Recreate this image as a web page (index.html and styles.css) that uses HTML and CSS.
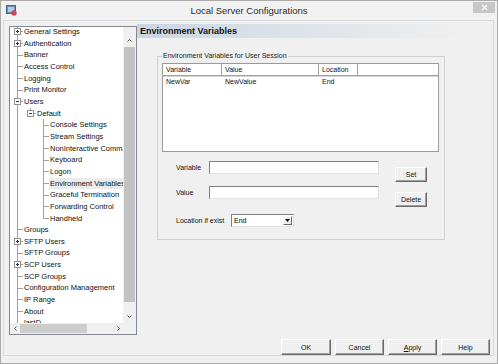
FILE: index.html
```html
<!DOCTYPE html>
<html lang="en">
<head>
    <meta charset="UTF-8">
    <title>Local Server Configurations</title>
    <link rel="stylesheet" href="styles.css">
</head>
<body>
    <div class="window">
        <div class="titlebar">
            <svg class="app-icon" width="11" height="11" viewBox="0 0 11 11">
                <rect x="0.5" y="0.5" width="9" height="8" fill="#6f8fb5" stroke="#44668f"/>
                <rect x="2" y="2" width="6" height="5" fill="#b3cbe4"/>
                <circle cx="8" cy="8" r="2.7" fill="#d9435a"/>
            </svg>
            <span class="title">Local Server Configurations</span>
            <span class="close">
                <svg width="7" height="7" viewBox="0 0 7 7"><path d="M1 1L6 6M6 1L1 6" stroke="#fff" stroke-width="1.2"/></svg>
            </span>
        </div>

        <div class="frame">
            <div class="main">
                <div class="tree-box">
                    <div class="tree-view">
                        <div class="tree-list">
                            <div class="node"><i class="joint"><b class="box plus"></b></i><span class="label">General Settings</span></div>
                            <div class="node"><i class="joint"><b class="box plus"></b></i><span class="label">Authentication</span></div>
                            <div class="node"><i class="joint"></i><span class="label">Banner</span></div>
                            <div class="node"><i class="joint"></i><span class="label">Access Control</span></div>
                            <div class="node"><i class="joint"></i><span class="label">Logging</span></div>
                            <div class="node"><i class="joint"></i><span class="label">Print Monitor</span></div>
                            <div class="node"><i class="joint"><b class="box minus"></b></i><span class="label">Users</span></div>
                            <div class="node lv1"><i class="joint last"><b class="box minus"></b></i><span class="label">Default</span></div>
                            <div class="node lv2"><i class="joint"></i><span class="label">Console Settings</span></div>
                            <div class="node lv2"><i class="joint"></i><span class="label">Stream Settings</span></div>
                            <div class="node lv2"><i class="joint"></i><span class="label">NonInteractive Commands</span></div>
                            <div class="node lv2"><i class="joint"></i><span class="label">Keyboard</span></div>
                            <div class="node lv2"><i class="joint"></i><span class="label">Logon</span></div>
                            <div class="node lv2"><i class="joint"></i><span class="label selected">Environment Variables</span></div>
                            <div class="node lv2"><i class="joint"></i><span class="label">Graceful Termination</span></div>
                            <div class="node lv2"><i class="joint"></i><span class="label">Forwarding Control</span></div>
                            <div class="node lv2"><i class="joint last"></i><span class="label">Handheld</span></div>
                            <div class="node"><i class="joint"></i><span class="label">Groups</span></div>
                            <div class="node"><i class="joint"><b class="box plus"></b></i><span class="label">SFTP Users</span></div>
                            <div class="node"><i class="joint"></i><span class="label">SFTP Groups</span></div>
                            <div class="node"><i class="joint"><b class="box plus"></b></i><span class="label">SCP Users</span></div>
                            <div class="node"><i class="joint"></i><span class="label">SCP Groups</span></div>
                            <div class="node"><i class="joint"></i><span class="label">Configuration Management</span></div>
                            <div class="node"><i class="joint"></i><span class="label">IP Range</span></div>
                            <div class="node"><i class="joint"></i><span class="label">About</span></div>
                            <div class="node"><i class="joint"></i><span class="label">lastD</span></div>
                        </div>
                    </div>
                    <div class="vscroll">
                        <div class="vs-up">
                            <svg width="5" height="3" viewBox="0 0 5 3"><path d="M0.5 2.5L2.5 0.5L4.5 2.5" fill="none" stroke="#555"/></svg>
                        </div>
                        <div class="vs-thumb"></div>
                        <div class="vs-down">
                            <svg width="5" height="3" viewBox="0 0 5 3"><path d="M0.5 0.5L2.5 2.5L4.5 0.5" fill="none" stroke="#555"/></svg>
                        </div>
                    </div>
                    <div class="hscroll">
                        <div class="hs-btn">
                            <svg width="3" height="5" viewBox="0 0 3 5"><path d="M2.5 0.5L0.5 2.5L2.5 4.5" fill="none" stroke="#555"/></svg>
                        </div>
                        <div class="hs-thumb"></div>
                        <div class="hs-track"></div>
                        <div class="hs-btn">
                            <svg width="3" height="5" viewBox="0 0 3 5"><path d="M0.5 0.5L2.5 2.5L0.5 4.5" fill="none" stroke="#555"/></svg>
                        </div>
                    </div>
                    <div class="corner"></div>
                </div>

                <div class="panel">
                    <div class="panel-head">Environment Variables</div>

                    <fieldset class="group">
                        <legend>Environment Variables for User Session</legend>

                        <div class="listview">
                            <div class="lv-head">
                                <span class="col col-var">Variable</span>
                                <span class="col col-val">Value</span>
                                <span class="col col-loc">Location</span>
                            </div>
                            <div class="lv-row">
                                <span class="col col-var">NewVar</span>
                                <span class="col col-val">NewValue</span>
                                <span class="col col-loc">End</span>
                            </div>
                        </div>

                        <div class="form">
                            <div class="frow frow1">
                                <label class="flabel">Variable</label>
                                <input class="field" type="text">
                                <button class="btn side-btn">Set</button>
                            </div>
                            <div class="frow frow2">
                                <label class="flabel">Value</label>
                                <input class="field" type="text">
                                <button class="btn side-btn">Delete</button>
                            </div>
                            <div class="frow frow3">
                                <label class="flabel wide">Location if exist</label>
                                <div class="select">
                                    <span class="select-text">End</span>
                                    <span class="select-arrow">
                                        <svg width="5" height="3" viewBox="0 0 5 3"><path d="M0 0H5L2.5 3Z" fill="#000"/></svg>
                                    </span>
                                </div>
                            </div>
                        </div>
                    </fieldset>
                </div>
            </div>

            <div class="buttons">
                <button class="btn dlg-btn ok">OK</button>
                <button class="btn dlg-btn">Cancel</button>
                <button class="btn dlg-btn"><u>A</u>pply</button>
                <button class="btn dlg-btn">Help</button>
            </div>
        </div>
    </div>
</body>
</html>
```

FILE: styles.css
```css
* {
    box-sizing: border-box;
}
body {
    margin: 0;
    background: #fff;
    font-family: "Liberation Sans", Arial, sans-serif;
    color: #000;
}
.window {
    width: 498px;
    height: 364px;
    border: 1px solid #ababab;
    background: #f0f0f0;
    display: flex;
    flex-direction: column;
}

/* title bar */
.titlebar {
    height: 19px;
    flex: none;
    display: grid;
    grid-template-columns: 1fr auto 1fr;
    align-items: center;
    background: #f2f2f2;
}
.app-icon {
    display: block;
    margin-left: 5px;
}
.title {
    font-size: 9.5px;
    color: #2b2b2b;
}
.close {
    justify-self: end;
    align-self: start;
    margin: 1px 2px 0 0;
    width: 22px;
    height: 11px;
    background: #c7c7c7;
    display: flex;
    align-items: center;
    justify-content: center;
}
.close svg {
    display: block;
}

.frame {
    flex: 1;
    margin: 0 3px 7px 2px;
    border: 1px solid #d9d9d9;
    padding: 5px 3px 0 5px;
    display: flex;
    flex-direction: column;
}
.main {
    display: flex;
    height: 309px;
}

/* tree */
.tree-box {
    width: 128px;
    height: 309px;
    flex: none;
    border: 1px solid #828790;
    background: #fff;
    display: grid;
    grid-template-columns: 113px 13px;
    grid-template-rows: 296px 11px;
}
.tree-view {
    overflow: hidden;
}
.tree-list {
    margin-top: -1px;
    background: linear-gradient(#a0a0a0, #a0a0a0) 7px 6px / 1px 100% no-repeat;
}
.node {
    display: flex;
    height: 11.67px;
    line-height: 11.67px;
    font-size: 7.5px;
    color: #111;
    white-space: nowrap;
}
.node.lv1 {
    padding-left: 13px;
}
.node.lv2 {
    padding-left: 26px;
}
.joint {
    flex: none;
    width: 13px;
    height: 100%;
    display: flex;
    align-items: center;
    background:
        linear-gradient(#a0a0a0, #a0a0a0) 7px 50% / 6px 1px no-repeat,
        linear-gradient(#a0a0a0, #a0a0a0) 7px 0 / 1px 100% no-repeat;
}
.joint.last {
    background:
        linear-gradient(#a0a0a0, #a0a0a0) 7px 50% / 6px 1px no-repeat,
        linear-gradient(#a0a0a0, #a0a0a0) 7px 0 / 1px 50% no-repeat;
}
.box {
    width: 7px;
    height: 7px;
    margin-left: 4px;
    border: 1px solid #919191;
}
.box.plus {
    background:
        linear-gradient(#333, #333) center / 3px 1px no-repeat,
        linear-gradient(#333, #333) center / 1px 3px no-repeat,
        #fff;
}
.box.minus {
    background:
        linear-gradient(#333, #333) center / 3px 1px no-repeat,
        #fff;
}
.label {
    padding: 0 1px;
}
.label.selected {
    background: #ececec;
}

.vscroll {
    background: #f0f0f0;
    display: flex;
    flex-direction: column;
}
.vs-up,
.vs-down {
    display: flex;
    justify-content: center;
    align-items: flex-end;
    padding-bottom: 5px;
}
.vs-up {
    height: 20px;
}
.vs-down {
    flex: 1;
}
.vs-thumb {
    height: 255px;
    margin: 0 1px;
    background: #c2c2c2;
}
.vscroll svg,
.hscroll svg {
    display: block;
}
.hscroll {
    background: #f0f0f0;
    display: flex;
    align-items: center;
}
.hs-btn {
    width: 10px;
    display: flex;
    justify-content: center;
}
.hs-thumb {
    width: 67px;
    height: 9px;
    background: #cdcdcd;
}
.hs-track {
    flex: 1;
}
.corner {
    background: #f0f0f0;
}

/* right panel */
.panel {
    flex: 1;
    margin-top: -2px;
}
.panel-head {
    height: 14px;
    line-height: 14px;
    padding-left: 3px;
    font-size: 9px;
    font-weight: bold;
    color: #111;
    background: linear-gradient(to right, #cbd6e2 0%, #dce3eb 45%, #f0f0f0 95%);
}
.group {
    margin: 13px 0 0 20px;
    width: 288px;
    border: 1px solid #d0d0d0;
    padding: 2px 4px 12px 4px;
}
.group legend {
    font-size: 7px;
    line-height: 10px;
    color: #222;
    padding: 0 1px;
}

.listview {
    width: 277px;
    height: 89px;
    border: 1px solid #9a9a9a;
    background: #fff;
    font-size: 7px;
    color: #111;
}
.lv-head {
    display: flex;
    height: 12px;
    border-bottom: 1px solid #a0a0a0;
    box-shadow: 0 1px 0 #d6d6d6;
}
.lv-head .col {
    line-height: 11px;
    border-right: 1px solid #a0a0a0;
}
.lv-row {
    display: flex;
    height: 12px;
}
.lv-row .col {
    line-height: 12px;
}
.col {
    padding-left: 3px;
    white-space: nowrap;
}
.col-var {
    width: 59px;
}
.col-val {
    width: 97px;
}
.col-loc {
    width: 39px;
}

.form {
    margin: 9px 0 0 14px;
}
.frow {
    display: flex;
    align-items: flex-start;
}
.frow1 {
    height: 25px;
}
.frow2 {
    height: 28px;
}
.frow3 {
    height: 13px;
}
.flabel {
    width: 33px;
    line-height: 13px;
    font-size: 7px;
    color: #111;
}
.flabel.wide {
    width: 55px;
}
.field {
    width: 170px;
    height: 13px;
    margin: 0;
    padding: 0;
    border: 1px solid;
    border-color: #7f7f7f #e3e3e3 #e3e3e3 #7f7f7f;
    background: #fff;
}
.select {
    width: 63px;
    height: 13px;
    border: 1px solid;
    border-color: #7f7f7f #e3e3e3 #e3e3e3 #7f7f7f;
    background: #fff;
    display: flex;
    font-size: 7px;
}
.select-text {
    flex: 1;
    line-height: 11px;
    padding-left: 2px;
}
.select-arrow {
    width: 9px;
    margin: 1px;
    background: #f0f0f0;
    border: 1px solid;
    border-color: #fff #696969 #696969 #fff;
    display: flex;
    align-items: center;
    justify-content: center;
}
.select-arrow svg {
    display: block;
}

/* buttons */
.btn {
    margin: 0;
    padding: 0;
    font-family: inherit;
    font-size: 7px;
    color: #111;
    background: #f0f0f0;
    border: 1px solid;
    border-color: #fff #696969 #696969 #fff;
    box-shadow: inset -1px -1px #a0a0a0;
}
.side-btn {
    width: 32px;
    height: 15px;
    margin: 6px 0 0 16px;
}
.buttons {
    display: flex;
    justify-content: flex-end;
    gap: 4px;
    margin-top: 4px;
    height: 16px;
}
.dlg-btn {
    width: 49px;
    height: 16px;
}
.dlg-btn.ok {
    width: 50px;
}
```
